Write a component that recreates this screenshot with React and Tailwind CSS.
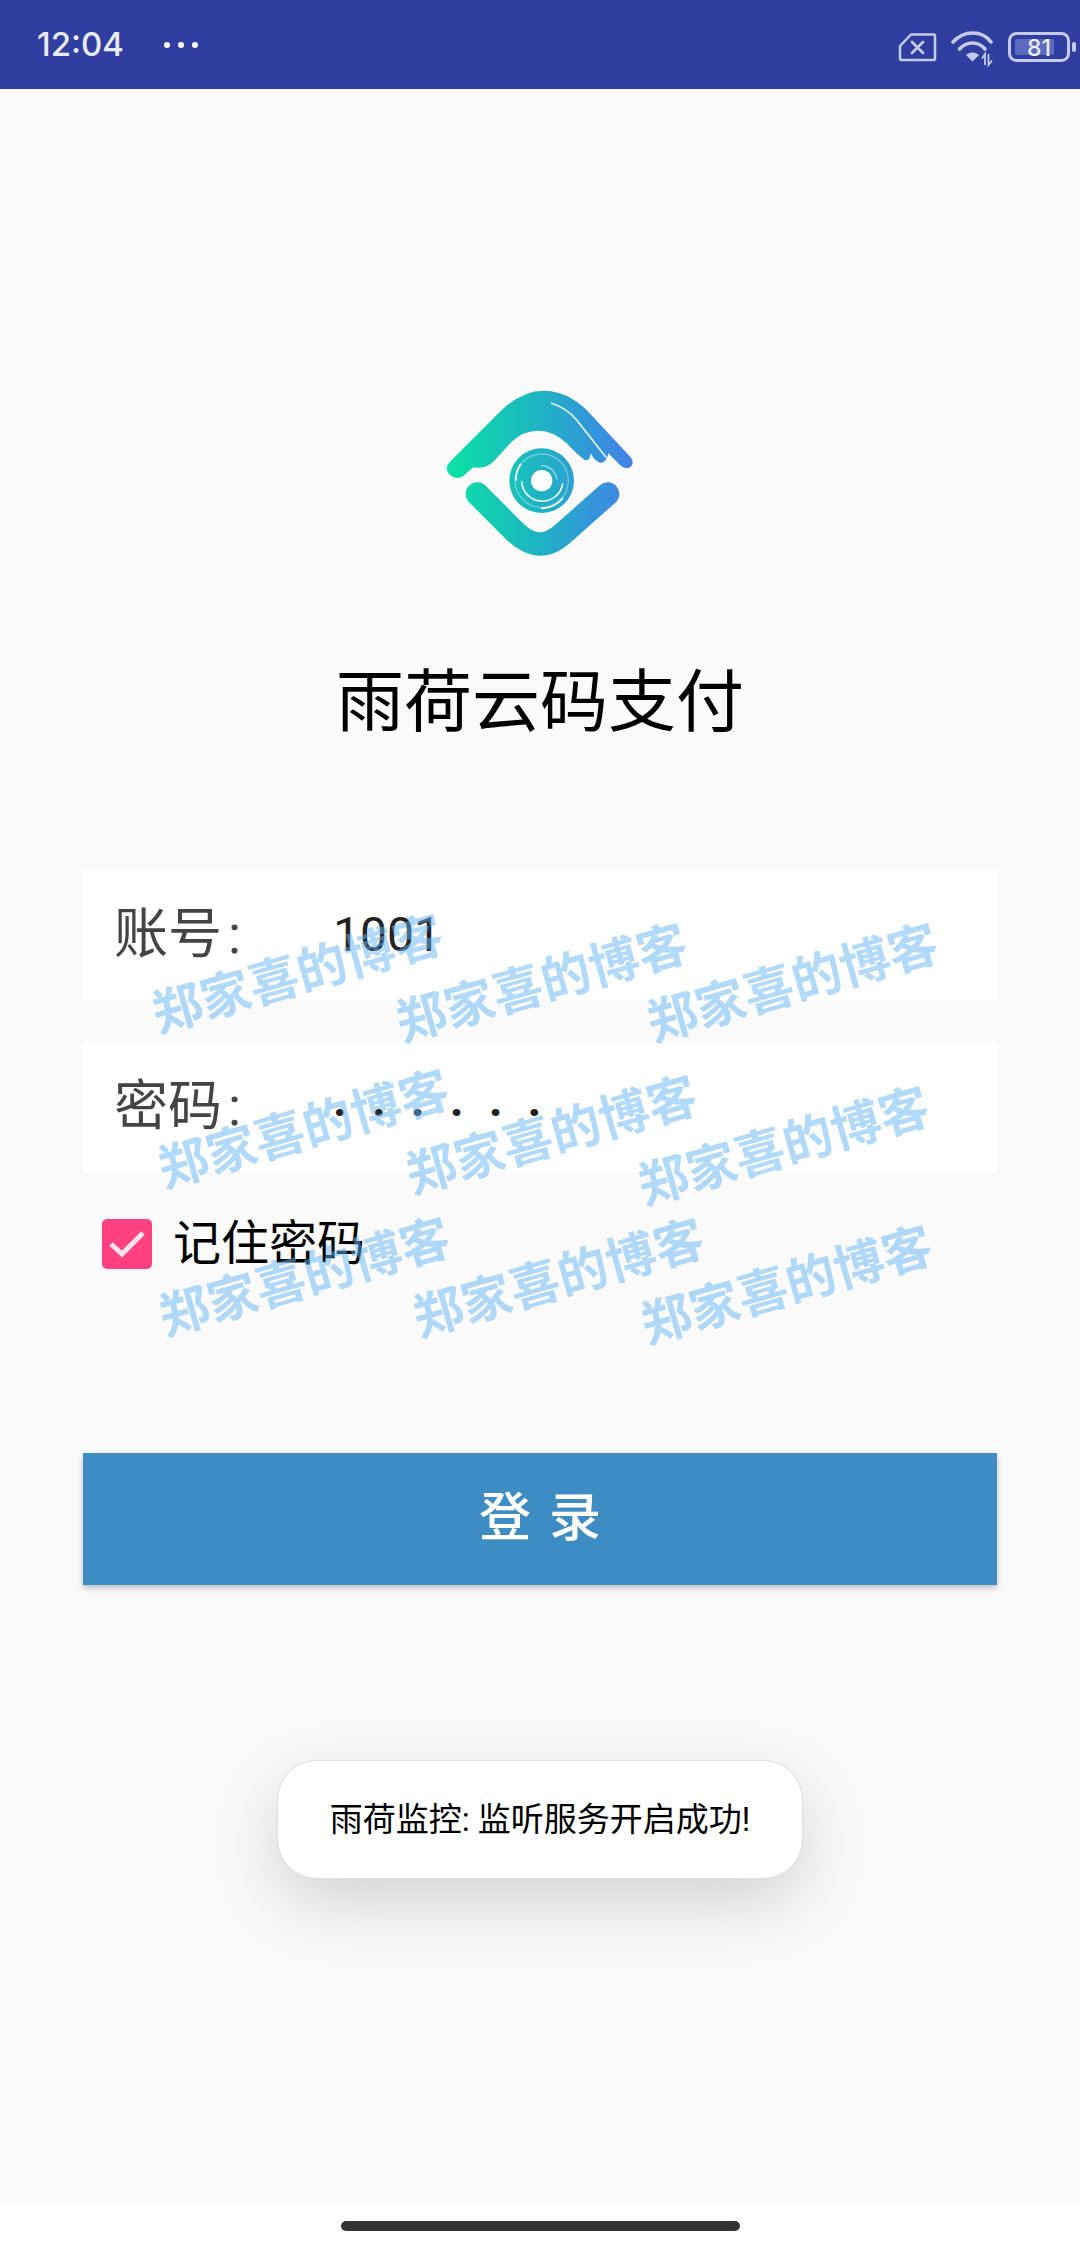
const font = "font-['Roboto','Noto_Sans_CJK_SC',sans-serif]";

const watermarks = [
  "left-[298px] top-[975px]",
  "left-[542px] top-[984px]",
  "left-[793px] top-[984px]",
  "left-[304px] top-[1130px]",
  "left-[552px] top-[1136px]",
  "left-[784px] top-[1147px]",
  "left-[305px] top-[1278px]",
  "left-[559px] top-[1279px]",
  "left-[787px] top-[1286px]",
];

const StatusIcons = () => (
  <svg width="190" height="89" viewBox="855 0 190 89" fill="none">
    {/* sim */}
    <path d="M876 34.5H898.5a1.5 1.5 0 0 1 1.5 1.500V58.500a1.500 1.500 0 0 1-1.500 1.500H866.500a1.500 1.500 0 0 1-1.500-1.500V46Z" stroke="#c5cae9" strokeWidth="2.500" strokeLinejoin="round" />
    <path d="M877 42L888 53M888 42L877 53" stroke="#c5cae9" strokeWidth="2.800" strokeLinecap="round" />
    {/* wifi */}
    <path d="M918 42C929 30 947 30 956 42" stroke="#c5cae9" strokeWidth="3.600" strokeLinecap="round" />
    <path d="M924.500 49C932 41 943 41 950 49" stroke="#c5cae9" strokeWidth="3.600" strokeLinecap="round" />
    <path d="M931 55C934 51.500 941 51.500 944 55L937.500 61.500Z" fill="#c5cae9" />
    <path d="M950 65V54L947 58.500M953.500 54V65L957 60.500" stroke="#c5cae9" strokeWidth="1.800" />
    {/* battery */}
    <rect x="974.500" y="33.500" width="59" height="27" rx="7" stroke="#c5cae9" strokeWidth="3" />
    <rect x="980" y="39" width="39" height="16" rx="2" fill="#5c6bc0" />
    <rect x="1037" y="42" width="4" height="10" rx="2" fill="#c5cae9" />
    <text x="1004" y="56" textAnchor="middle" fontSize="23" fontWeight="500" fontFamily="Inter, Roboto, sans-serif" fill="#eceef8">81</text>
  </svg>
);

const Logo = () => (
  <svg width="240" height="200" viewBox="0 0 720 600" className="block mx-auto" fill="none">
    <defs>
      <linearGradient id="logoGrad" gradientUnits="userSpaceOnUse" x1="80" y1="300" x2="640" y2="300">
        <stop offset="0" stopColor="#0be3a4" />
        <stop offset="0.5" stopColor="#1eb3c4" />
        <stop offset="1" stopColor="#4480ea" />
      </linearGradient>
    </defs>
    <path
      d="M90 275L230 135Q300 62 370 62Q440 62 500 120L632 262Q645 280 630 292Q615 300 600 285L565 250Q560 280 540 278Q525 275 512 250Q510 275 495 270Q480 262 440 220Q400 182 355 182Q310 182 275 215L225 270Q200 298 160 292L130 318Q110 332 90 315Q70 295 90 275Z"
      fill="url(#logoGrad)"
    />
    <path d="M172 372L285 485Q360 559 435 485L563 372" stroke="url(#logoGrad)" strokeWidth="70" strokeLinecap="round" strokeLinejoin="round" />
    <path d="M395 100Q440 115 470 150L558 262" stroke="#e8f4fb" strokeWidth="5" strokeLinecap="round" />
    <circle cx="365" cy="332" r="97" fill="url(#logoGrad)" />
    <circle cx="365" cy="332" r="80" stroke="#ffffff" strokeOpacity="0.35" strokeWidth="4" />
    <path d="M288 330A78 78 0 0 1 302 283" stroke="#ffffff" strokeWidth="5" strokeLinecap="round" />
    <path d="M365 415A82 82 0 0 0 428 385" stroke="#ffffff" strokeWidth="5" strokeLinecap="round" />
    <path d="M305 335A62 62 0 0 0 428 342" stroke="#ffffff" strokeOpacity="0.85" strokeWidth="5" strokeLinecap="round" />
    <path d="M365 287A46 46 0 0 1 410 325" stroke="#ffffff" strokeOpacity="0.6" strokeWidth="4" strokeLinecap="round" />
    <circle cx="365" cy="332" r="32" fill="#ffffff" />
  </svg>
);

const FormRow = ({ label, children }) => (
  <div className="h-[130px] bg-white flex items-center pl-[31px]">
    <div className="w-[219px] text-[54px] leading-none text-[#444444]">
      {label}
      <span className="ml-[6px]">:</span>
    </div>
    {children}
  </div>
);

export default function App() {
  return (
    <div className={`relative w-[1080px] h-[2248px] overflow-hidden flex flex-col bg-white ${font}`}>
      <div className="h-[89px] bg-[#303f9f] flex items-center justify-between pl-[37px]">
        <div className="flex items-center">
          <span className="text-[33px] font-medium leading-none text-[#e8eaf6] font-['Inter',sans-serif]">12:04</span>
          <div className="flex gap-[8px] ml-[40px]">
            <span className="w-[6px] h-[6px] rounded-full bg-white" />
            <span className="w-[6px] h-[6px] rounded-full bg-white" />
            <span className="w-[6px] h-[6px] rounded-full bg-white" />
          </div>
        </div>
        <StatusIcons />
      </div>

      <div className="flex-1 bg-[#fafafa] pt-[281px] px-[83px]">
        <Logo />
        <div className="mt-[93px] text-center text-[68px] leading-[80px] text-black">雨荷云码支付</div>

        <div className="mt-[127px] flex flex-col gap-[42px]">
          <FormRow label="账号">
            <span className="text-[48px] leading-none text-[#222222]">1001</span>
          </FormRow>
          <FormRow label="密码">
            <span className="text-[48px] leading-none text-[#222222] tracking-[25px] -mt-[14px] font-bold">......</span>
          </FormRow>
        </div>

        <div className="mt-[47px] h-[50px] flex items-center pl-[19px]">
          <div className="w-[50px] h-[50px] rounded-[5px] bg-[#ff4081] flex items-center justify-center">
            <svg width="38" height="30" viewBox="0 0 38 30" fill="none">
              <path d="M3 15L14 25L35 4" stroke="#fde3ec" strokeWidth="5" />
            </svg>
          </div>
          <span className="ml-[21px] text-[48px] leading-none text-black">记住密码</span>
        </div>

        <button className="mt-[184px] w-full h-[132px] bg-[#3d8dc4] text-white text-[52px] font-medium shadow-[0_3px_6px_rgba(0,0,0,0.25)] tracking-[18px] pl-[18px]">
          登录
        </button>

        <div className="mt-[175px] mx-auto w-[526px] h-[119px] bg-white rounded-[40px] border border-[#dddddd] flex items-center justify-center text-[33px] leading-none text-black shadow-[0_24px_70px_rgba(0,0,0,0.16)]">
          雨荷监控: 监听服务开启成功!
        </div>
      </div>

      <div className="h-[44px] bg-white flex items-start justify-center pt-[17px]">
        <div className="w-[399px] h-[10px] rounded-full bg-[#333333]" />
      </div>

      {watermarks.map((pos) => (
        <div
          key={pos}
          className={`absolute ${pos} -translate-x-1/2 -translate-y-1/2 -rotate-[16deg] whitespace-nowrap text-[50px] leading-none font-bold text-[#64b5f6]/50`}
        >
          郑家喜的博客
        </div>
      ))}
    </div>
  );
}
